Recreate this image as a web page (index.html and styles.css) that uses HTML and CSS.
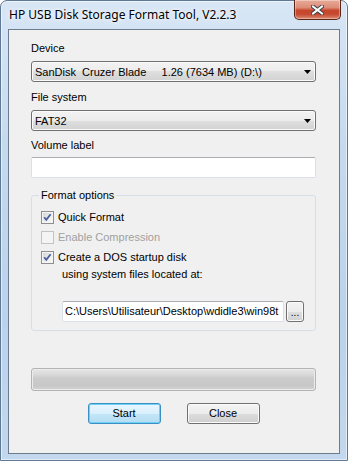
FILE: index.html
```html
<!DOCTYPE html>
<html lang="en">
<head>
    <meta charset="UTF-8">
    <title>HP USB Disk Storage Format Tool</title>
    <link rel="stylesheet" href="styles.css">
</head>
<body>
    <div class="window">
        <div class="titlebar">
            <span class="title">HP USB Disk Storage Format Tool, V2.2.3</span>
            <span class="close-x">
                <svg width="13" height="10" viewBox="0 0 13 10">
                    <path d="M2 1.5 L11 8.5 M11 1.5 L2 8.5" stroke="#3b3f46" stroke-width="4" stroke-linecap="square"/>
                    <path d="M2 1.5 L11 8.5 M11 1.5 L2 8.5" stroke="#ffffff" stroke-width="2" stroke-linecap="square"/>
                </svg>
            </span>
        </div>
        <div class="client">
            <div class="label">Device</div>
            <div class="combo">
                <span class="combo-text">SanDisk&nbsp; Cruzer Blade&nbsp;&nbsp;&nbsp;&nbsp; 1.26 (7634 MB) (D:\)</span>
                <svg class="arrow" width="7" height="4" viewBox="0 0 7 4"><polygon points="0,0 7,0 3.5,4" fill="#000"/></svg>
            </div>
            <div class="label label-gap">File system</div>
            <div class="combo">
                <span class="combo-text">FAT32</span>
                <svg class="arrow" width="7" height="4" viewBox="0 0 7 4"><polygon points="0,0 7,0 3.5,4" fill="#000"/></svg>
            </div>
            <div class="label label-gap2">Volume label</div>
            <div class="textbox volume"></div>

            <fieldset class="group">
                <legend>Format options</legend>
                <div class="check-row">
                    <span class="cb">
                        <svg width="11" height="11" viewBox="0 0 11 11"><path d="M2.2 5.2 L4.3 7.8 L8.6 2.2" fill="none" stroke="#4a5f97" stroke-width="1.8"/></svg>
                    </span>
                    <span class="cb-text">Quick Format</span>
                </div>
                <div class="check-row disabled">
                    <span class="cb"></span>
                    <span class="cb-text">Enable Compression</span>
                </div>
                <div class="check-row">
                    <span class="cb">
                        <svg width="11" height="11" viewBox="0 0 11 11"><path d="M2.2 5.2 L4.3 7.8 L8.6 2.2" fill="none" stroke="#4a5f97" stroke-width="1.8"/></svg>
                    </span>
                    <span class="cb-text">Create a DOS startup disk</span>
                </div>
                <div class="sub-text">using system files located at:</div>
                <div class="path-row">
                    <div class="textbox path">C:\Users\Utilisateur\Desktop\wdidle3\win98t</div>
                    <div class="browse">...</div>
                </div>
            </fieldset>

            <div class="progress"></div>

            <div class="buttons">
                <div class="btn default">Start</div>
                <div class="btn">Close</div>
            </div>
        </div>
    </div>
</body>
</html>
```

FILE: styles.css
```css
*{
    box-sizing: border-box;
}
body{
    margin: 0;
    font-family: "Liberation Sans", Arial, sans-serif;
    font-size: 11px;
    color: #000;
    background: #fff;
}
.window{
    width: 348px;
    height: 461px;
    border: 1px solid #5f7893;
    border-radius: 7px 7px 0 0;
    padding: 0 7px 6px 7px;
    display: flex;
    flex-direction: column;
    background: linear-gradient(to bottom, #d8e6f5 0%, #c6daef 30%, #bad2eb 70%, #c3d8ee 100%);
    box-shadow: inset 0 0 0 1px rgba(255,255,255,0.55);
}
.titlebar{
    height: 28px;
    display: flex;
    justify-content: space-between;
    align-items: flex-start;
}
.title{
    font-family: "Noto Sans", sans-serif;
    font-size: 12px;
    line-height: 16px;
    margin: 6px 0 0 1px;
    text-shadow: 0 0 6px #fff, 0 0 3px #fff;
}
.close-x{
    width: 47px;
    height: 20px;
    margin: -1px -1px 0 0;
    border: 1px solid #5a2418;
    border-top: none;
    border-radius: 0 0 5px 5px;
    background: linear-gradient(to bottom, #e9ab9a 0%, #dc8c76 40%, #c7462c 55%, #c54a31 75%, #dd8a72 100%);
    box-shadow: inset 0 0 0 1px rgba(255,255,255,0.35);
    display: flex;
    align-items: center;
    justify-content: center;
}
.client{
    flex: 1;
    background: #f0f0f0;
    border: 1px solid #6c7c8e;
    padding: 12px 23px 0 22px;
}
.label{
    height: 13px;
    line-height: 13px;
}
.label-gap{
    margin-top: 9px;
}
.label-gap2{
    margin-top: 8px;
}
.combo{
    height: 21px;
    margin-top: 6px;
    border: 1px solid #707070;
    border-radius: 3px;
    background: linear-gradient(to bottom, #f3f3f3 0%, #ececec 50%, #dfdfdf 50%, #d2d2d2 100%);
    box-shadow: inset 0 0 0 1px #fbfbfb;
    display: flex;
    align-items: center;
    padding: 2px 0 0 3px;
}
.combo-text{
    line-height: 13px;
    white-space: nowrap;
}
.arrow{
    margin-left: auto;
    margin-right: 4px;
    margin-top: -2px;
}
.textbox{
    height: 21px;
    background: #fff;
    border: 1px solid #dbdfe6;
    border-top-color: #abadb3;
    border-radius: 2px;
}
.volume{
    margin-top: 5px;
}
.group{
    margin: 11px 0 0 0;
    padding: 6px 7px 8px 7px;
    border: 1px solid #d5dfe5;
    border-radius: 3px;
    min-width: 0;
}
.group legend{
    padding: 0 2px;
    line-height: 13px;
}
.check-row{
    height: 20px;
    padding-top: 3px;
    margin-left: 2px;
    display: flex;
    align-items: flex-start;
}
.cb{
    width: 13px;
    height: 13px;
    border: 1px solid #8e8f8f;
    background: linear-gradient(135deg, #cdd1d7 0%, #eef0f2 60%, #fafafa 100%);
    box-shadow: inset 0 0 0 1px #f4f4f4;
    display: flex;
}
.cb-text{
    margin-left: 4px;
    line-height: 13px;
}
.disabled .cb{
    border-color: #c4c4c4;
    background: #f4f4f4;
    box-shadow: none;
}
.disabled .cb-text{
    color: #a0a0a0;
}
.sub-text{
    line-height: 13px;
    margin-left: 23px;
}
.path-row{
    display: flex;
    margin: 20px 0 0 23px;
}
.path{
    width: 222px;
    padding: 0 0 0 2px;
    line-height: 19px;
    white-space: nowrap;
    overflow: hidden;
}
.browse{
    width: 18px;
    height: 21px;
    margin-left: 2px;
    border: 1px solid #707070;
    border-radius: 3px;
    background: linear-gradient(to bottom, #f3f3f3 0%, #ececec 50%, #dfdfdf 50%, #d2d2d2 100%);
    box-shadow: inset 0 0 0 1px #fbfbfb;
    text-align: center;
    line-height: 21px;
    font-size: 10px;
}
.progress{
    height: 23px;
    margin-top: 37px;
    border: 1px solid #b4b4b4;
    border-radius: 3px;
    background: linear-gradient(to bottom, #e6e6e6 0%, #dadada 25%, #cbcbcb 45%, #c8c8c8 80%, #d4d4d4 100%);
    box-shadow: inset 0 0 0 1px #ececec;
}
.buttons{
    display: flex;
    justify-content: center;
    gap: 26px;
    margin-top: 12px;
}
.btn{
    width: 73px;
    height: 21px;
    border: 1px solid #707070;
    border-radius: 3px;
    background: linear-gradient(to bottom, #f3f3f3 0%, #ececec 50%, #dddddd 50%, #cfcfcf 100%);
    box-shadow: inset 0 0 0 1px #fbfbfb;
    text-align: center;
    line-height: 19px;
}
.btn.default{
    border-color: #3c8fc4;
    background: linear-gradient(to bottom, #eaf6fd 0%, #d9f0fc 50%, #c4e6f8 50%, #b4ddf3 100%);
    box-shadow: inset 0 0 0 1px #6fd0f6;
}
```
